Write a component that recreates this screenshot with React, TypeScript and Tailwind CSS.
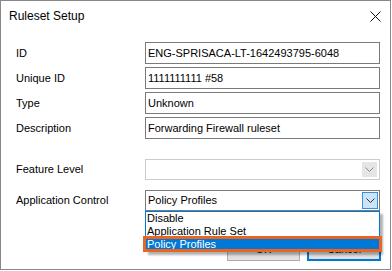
import React from 'react';

const font = { fontFamily: '"Liberation Sans", Arial, sans-serif' };

function Chevron({ color }: { color: string }) {
    return (
        <svg width="9" height="6" viewBox="0 0 9 6">
            <path d="M0.5 0.5 L4.5 4.5 L8.5 0.5" fill="none" stroke={color} strokeWidth="1" />
        </svg>
    );
}

function TextRow({ label, value }: { label: string; value: string }) {
    return (
        <div className="grid grid-cols-[129px_235px] items-center">
            <span className="text-[11px] text-black">{label}</span>
            <div className="h-[22px] border border-[#7a7a7a] bg-white flex items-center px-[2px] text-[11px] text-black">
                {value}
            </div>
        </div>
    );
}

export default function App() {
    const items = ['Disable', 'Application Rule Set', 'Policy Profiles'];

    return (
        <div className="w-[392px] h-[271px] bg-white" style={font}>
            <div className="w-[391px] h-[270px] border border-[#888888] bg-white flex flex-col">
                <div className="h-[30px] flex items-center justify-between pl-[8px] pr-[9px]">
                    <span className="text-[12px] text-black">Ruleset Setup</span>
                    <svg width="11" height="11" viewBox="0 0 11 11">
                        <path d="M0.5 0.5 L10.5 10.5 M10.5 0.5 L0.5 10.5" stroke="#111" strokeWidth="1" />
                    </svg>
                </div>

                <div className="flex flex-col gap-[3px] pl-[15px] mt-[11px]">
                    <TextRow label="ID" value="ENG-SPRISACA-LT-1642493795-6048" />
                    <TextRow label="Unique ID" value="1111111111 #58" />
                    <TextRow label="Type" value="Unknown" />
                    <TextRow label="Description" value="Forwarding Firewall ruleset" />
                </div>

                <div className="flex flex-col gap-[10px] pl-[15px] mt-[20px]">
                    <div className="grid grid-cols-[129px_235px] items-center">
                        <span className="text-[11px] text-black">Feature Level</span>
                        <div className="h-[21px] border border-[#cccccc] bg-white flex items-center justify-end p-[2px]">
                            <div className="w-[15px] h-full bg-[#e5e5e5] flex items-center justify-center">
                                <Chevron color="#888888" />
                            </div>
                        </div>
                    </div>

                    <div className="grid grid-cols-[129px_235px] items-center">
                        <span className="text-[11px] text-black">Application Control</span>
                        <div className="relative">
                            <div className="h-[21px] border border-[#7a7a7a] bg-white flex items-center justify-between pl-[2px] p-[1px]">
                                <span className="text-[11px] text-black">Policy Profiles</span>
                                <div className="w-[16px] h-full bg-[#cce4f7] border border-[#3c8fd8] flex items-center justify-center">
                                    <Chevron color="#333333" />
                                </div>
                            </div>

                            <div className="absolute left-0 top-full w-[235px] border border-[#0078d7] bg-white shadow-[3px_3px_2px_rgba(0,0,0,0.3)] z-10 flex flex-col">
                                {items.map((item, i) => (
                                    <div
                                        key={item}
                                        className={
                                            i === 2
                                                ? 'h-[13px] leading-[13px] text-[11px] px-[1px] bg-[#0078d7] text-white'
                                                : 'h-[13px] leading-[13px] text-[11px] px-[1px] text-black overflow-hidden'
                                        }
                                    >
                                        {item}
                                    </div>
                                ))}
                            </div>
                            <div className="absolute left-[-2px] top-[46px] w-[239px] h-[16px] border-[3px] border-[#eb6420] z-20" />
                        </div>
                    </div>
                </div>

                <div className="flex justify-end gap-[7px] pr-[9px] mt-[27px]">
                    <div className="w-[73px] h-[23px] border border-[#adadad] bg-[#e1e1e1] flex items-center justify-center text-[11px] text-black">
                        OK
                    </div>
                    <div className="w-[74px] h-[23px] border-2 border-[#0078d7] bg-[#e1e1e1] flex items-center justify-center text-[11px] text-black">
                        Cancel
                    </div>
                </div>
            </div>
        </div>
    );
}
